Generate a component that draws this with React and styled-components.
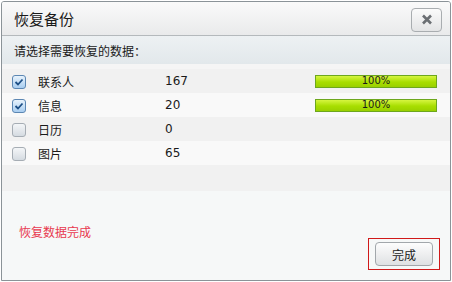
import React from 'react';
import styled, { createGlobalStyle } from 'styled-components';

const GlobalStyle = createGlobalStyle`
    html, body {
        margin: 0;
        padding: 0;
        background: #ffffff;
    }
    body {
        font-family: "DejaVu Sans", "Noto Sans CJK SC", sans-serif;
    }
`;

const rows = [
    { name: '联系人', count: '167', checked: true, progress: 100 },
    { name: '信息', count: '20', checked: true, progress: 100 },
    { name: '日历', count: '0', checked: false },
    { name: '图片', count: '65', checked: false },
];

const CheckIcon = () => (
    <svg width="10" height="8" viewBox="0 0 10 8">
        <path d="M1.5 4 L4 6.5 L8.5 1.5" fill="none" stroke="#1d4f86" strokeWidth="1.8" />
    </svg>
);

const App = () => {
    return (
        <>
            <GlobalStyle />
            <S.Dialog>
                <S.TitleBar>
                    <S.Title>恢复备份</S.Title>
                    <S.CloseButton>
                        <svg width="12" height="11" viewBox="0 0 12 11">
                            <path d="M2 1.5 L10 9.5 M10 1.5 L2 9.5" stroke="#6b6f73" strokeWidth="2.6" />
                        </svg>
                    </S.CloseButton>
                </S.TitleBar>

                <S.SubHeader>请选择需要恢复的数据：</S.SubHeader>

                <S.List>
                    {rows.map((row, i) => (
                        <S.Row key={row.name} $alt={i % 2 === 0}>
                            <S.Checkbox $checked={row.checked}>
                                {row.checked && <CheckIcon />}
                            </S.Checkbox>
                            <S.Name>{row.name}</S.Name>
                            <S.Count>{row.count}</S.Count>
                            {row.progress != null && (
                                <S.Progress>{row.progress}%</S.Progress>
                            )}
                        </S.Row>
                    ))}
                    <S.Filler />
                </S.List>

                <S.Footer>
                    <S.Status>恢复数据完成</S.Status>
                    <S.FocusFrame>
                        <S.Button>完成</S.Button>
                    </S.FocusFrame>
                </S.Footer>
            </S.Dialog>
        </>
    );
};

const S = {};

S.Dialog = styled.div`
    width: 450px;
    height: 280px;
    margin: 1px 0 0 1px;
    box-sizing: border-box;
    border: 1px solid #8b9398;
    border-radius: 3px 3px 0 0;
    background: #f6f8f8;
    display: flex;
    flex-direction: column;
    overflow: hidden;
`;

S.TitleBar = styled.div`
    height: 33px;
    flex-shrink: 0;
    display: flex;
    align-items: center;
    justify-content: space-between;
    padding: 0 8px 0 12px;
    background: linear-gradient(#fafafa, #e9eaeb);
    border-bottom: 1px solid #b4b9bc;
`;

S.Title = styled.span`
    font-size: 15px;
    color: #1a1a1a;
    font-family: "Noto Sans CJK SC", sans-serif;
`;

S.CloseButton = styled.div`
    width: 31px;
    height: 24px;
    margin-top: 2px;
    box-sizing: border-box;
    border: 1px solid #a9adb0;
    border-radius: 4px;
    background: linear-gradient(#fbfbfb, #e3e4e5);
    display: flex;
    align-items: center;
    justify-content: center;
`;

S.SubHeader = styled.div`
    height: 28px;
    flex-shrink: 0;
    display: flex;
    align-items: center;
    padding-left: 12px;
    font-size: 12px;
    color: #1a1a1a;
    background: linear-gradient(#edf1f3, #e2e8eb);
    font-family: "Noto Sans CJK SC", sans-serif;
`;

S.List = styled.div`
    display: flex;
    flex-direction: column;
    padding-top: 5px;
    background: #f5f5f5;
`;

S.Row = styled.div`
    height: 24px;
    display: flex;
    align-items: center;
    padding-left: 10px;
    background: ${({ $alt }) => ($alt ? '#f1f1f1' : '#f9f9f9')};
`;

S.Checkbox = styled.div`
    width: 14px;
    height: 14px;
    margin-top: 2px;
    box-sizing: border-box;
    border-radius: 3px;
    border: 1px solid ${({ $checked }) => ($checked ? '#5c87b3' : '#a6adb4')};
    background: ${({ $checked }) =>
        $checked
            ? 'linear-gradient(#e8f3fc, #a8cdf0)'
            : 'linear-gradient(#f4f6f8, #d5dbe1)'};
    display: flex;
    align-items: center;
    justify-content: center;
`;

S.Name = styled.span`
    width: 127px;
    margin-left: 12px;
    font-size: 12px;
    color: #1a1a1a;
    font-family: "Noto Sans CJK SC", sans-serif;
`;

S.Count = styled.span`
    width: 150px;
    font-size: 12px;
    color: #1a1a1a;
`;

S.Progress = styled.div`
    width: 122px;
    height: 13px;
    box-sizing: border-box;
    border: 1px solid #6da71d;
    background: linear-gradient(#d6f540, #a8de00 55%, #9ad000);
    display: flex;
    align-items: center;
    justify-content: center;
    font-size: 10px;
    color: #1a1a1a;
    line-height: 1;
`;

S.Filler = styled.div`
    height: 26px;
    background: #f1f1f1;
`;

S.Footer = styled.div`
    flex: 1;
    display: flex;
    justify-content: space-between;
    align-items: flex-end;
    padding: 0 10px 10px 17px;
    background: #f6f8f8;
`;

S.Status = styled.span`
    align-self: flex-start;
    margin-top: 32px;
    font-size: 12px;
    color: #e8384f;
    font-family: "Noto Sans CJK SC", sans-serif;
`;

S.FocusFrame = styled.div`
    width: 72px;
    height: 32px;
    box-sizing: border-box;
    border: 1px solid #d01a1a;
    display: flex;
    align-items: center;
    justify-content: center;
`;

S.Button = styled.div`
    width: 58px;
    height: 24px;
    box-sizing: border-box;
    border: 1px solid #a2a7ab;
    border-radius: 4px;
    background: linear-gradient(#fdfdfd, #dfe1e3);
    display: flex;
    align-items: center;
    justify-content: center;
    font-size: 12px;
    color: #1a1a1a;
    font-family: "Noto Sans CJK SC", sans-serif;
`;

export default App;
